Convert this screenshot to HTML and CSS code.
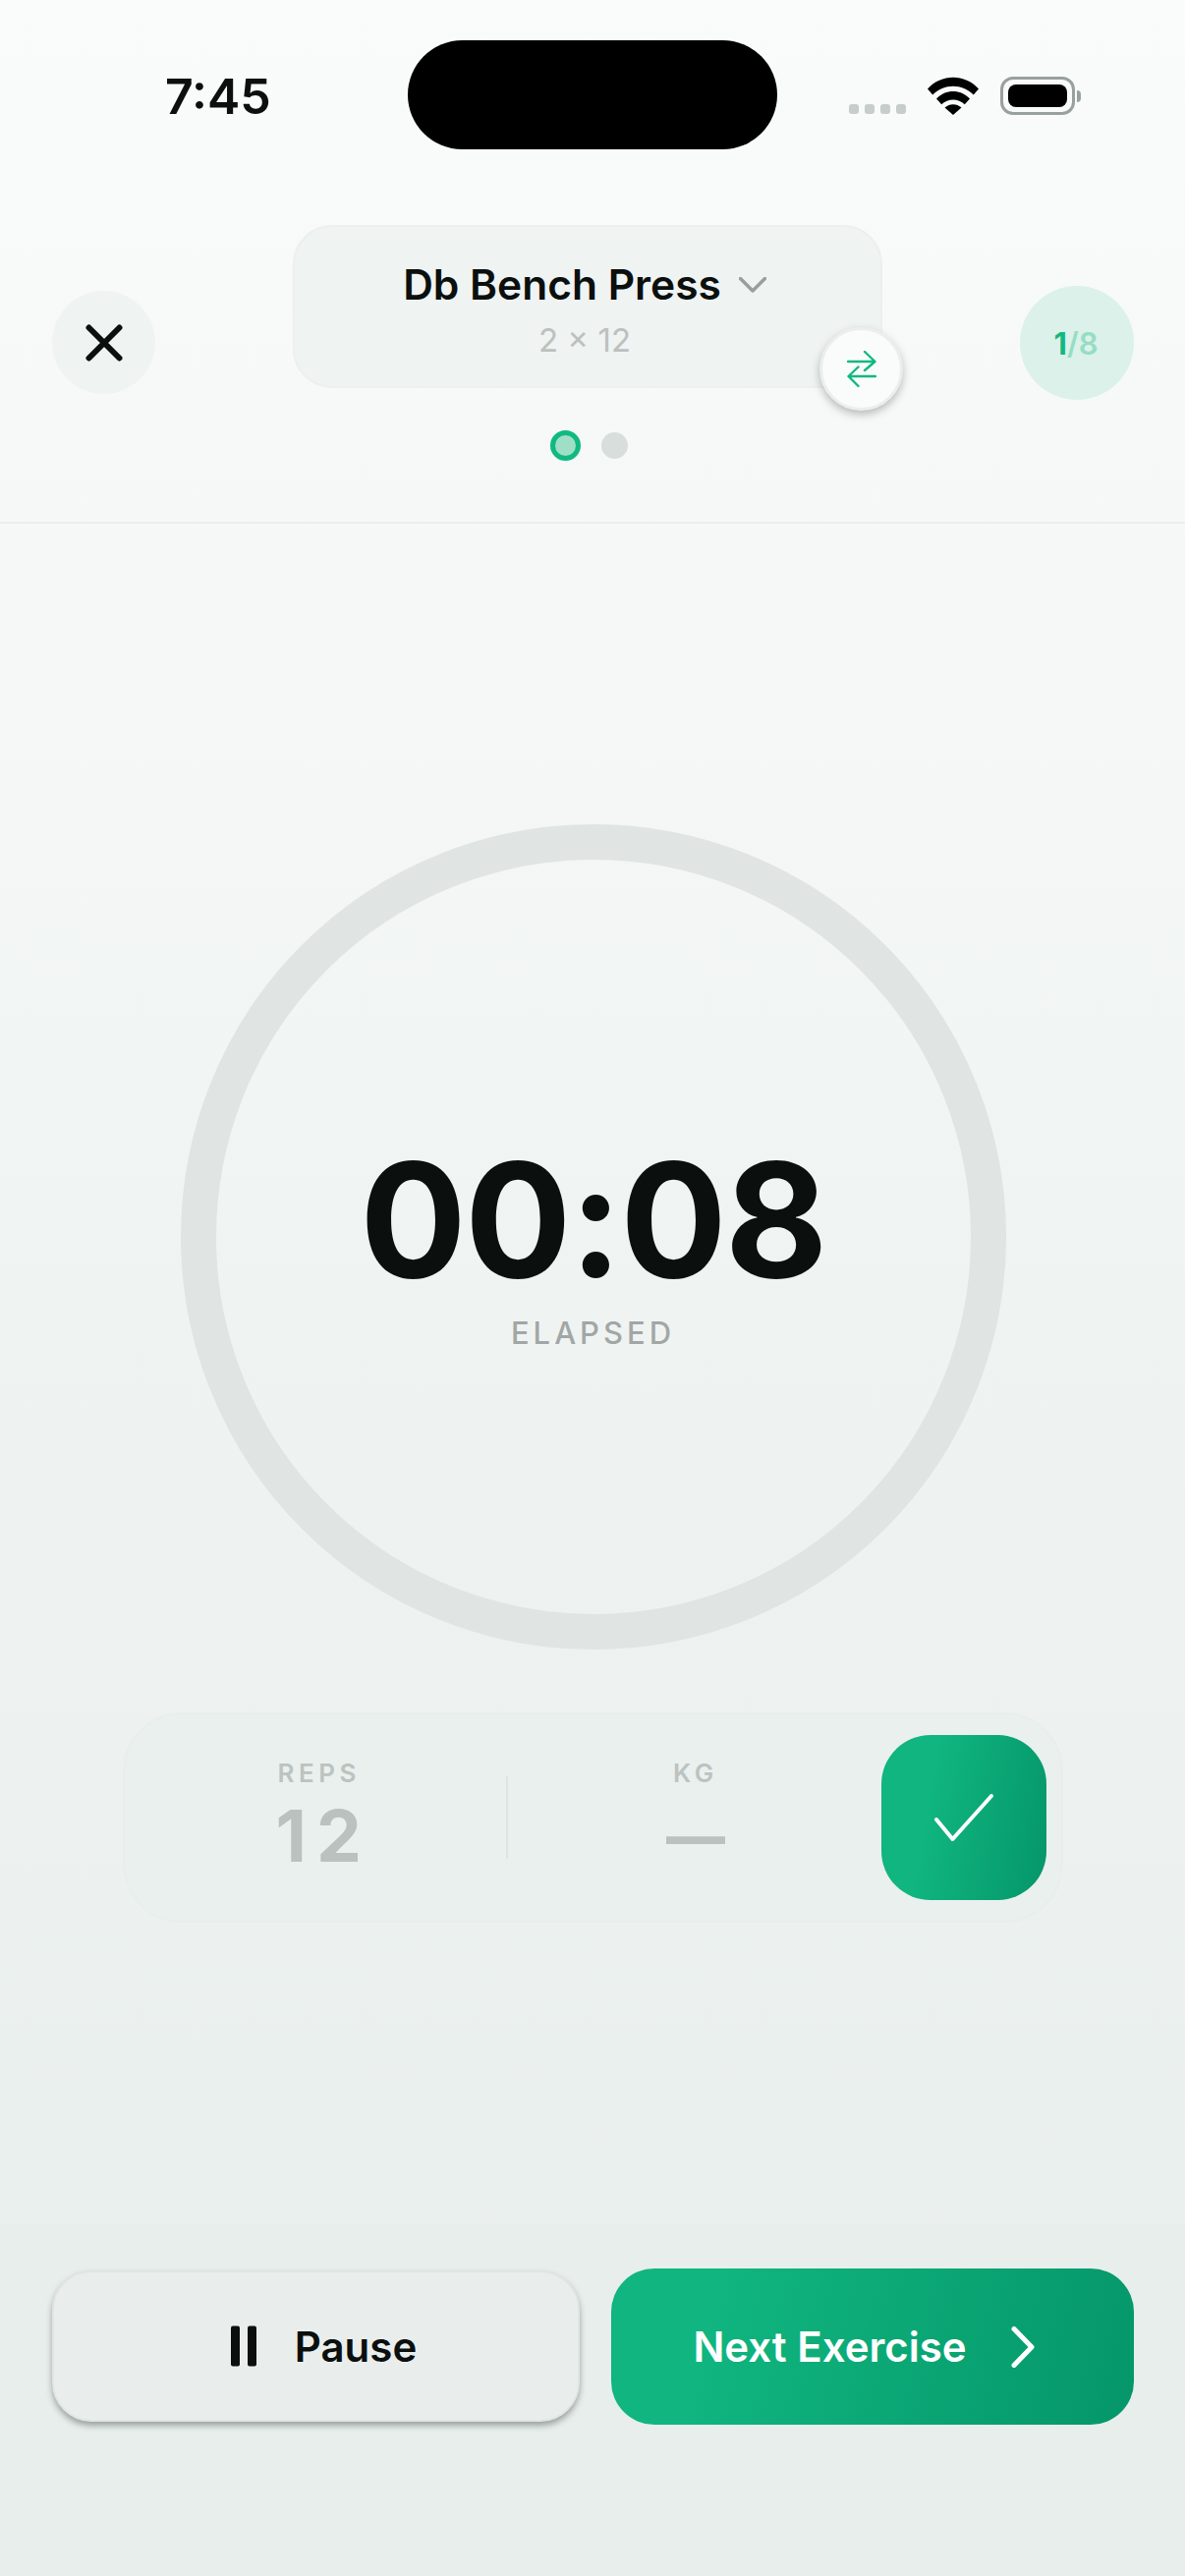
FILE: index.html
```html
<!DOCTYPE html>
<html lang="en">
<head>
  <meta charset="UTF-8" />
  <meta name="viewport" content="width=device-width, initial-scale=1.0" />
  <title>Workout Timer</title>
  <link rel="stylesheet" href="styles.css">
</head>
<body>
  <div class="screen">
    <div class="island"></div>

    <div class="status-bar">
      <span class="clock">7:45</span>
      <div class="status-icons">
        <div class="signal"><i></i><i></i><i></i><i></i></div>
        <svg class="wifi" viewBox="0 0 52 39" width="52" height="39">
          <path d="M0 12.500C14-3.200 38-3.200 52 12.500L46.800 18.500C35.500 6.800 16.500 6.800 5.200 18.500Z" fill="#000"/>
          <path d="M9 22.500C18.500 12.600 33.500 12.600 43 22.500L37.800 28.300C31.200 21.800 20.800 21.800 14.200 28.300Z" fill="#000"/>
          <path d="M17.500 31.500C22.500 27 29.500 27 34.500 31.500L26 39Z" fill="#000"/>
        </svg>
        <div class="battery"><div class="battery-fill"></div></div>
        <div class="battery-nub"></div>
      </div>
    </div>

    <header class="top">
      <button class="close-btn" aria-label="Close">
        <svg viewBox="0 0 38 38" width="38" height="38">
          <path d="M3.500 3.500L34.500 34.500M34.500 3.500L3.500 34.500" stroke="#0b0f0e" stroke-width="6" stroke-linecap="round" fill="none"/>
        </svg>
      </button>

      <div class="title-col">
        <div class="title-card">
          <div class="title-row">
            <span class="title">Db Bench Press</span>
            <svg viewBox="0 0 28 16" width="28" height="16">
              <path d="M1.500 1.500L14 14L26.500 1.500" stroke="#9a9f9d" stroke-width="3.500" stroke-linecap="round" stroke-linejoin="round" fill="none"/>
            </svg>
          </div>
          <div class="sub">2 × 12</div>
          <button class="swap-btn" aria-label="Swap exercise">
            <svg viewBox="0 0 30 38" width="30" height="38">
              <path d="M1 11H28M18 1L28.500 11L18 20M29 26H2M11.500 16.500L1.500 26L11.500 36" stroke="#10b981" stroke-width="2.400" stroke-linecap="round" stroke-linejoin="round" fill="none"/>
            </svg>
          </button>
        </div>
        <div class="pager">
          <span class="dot active"></span>
          <span class="dot"></span>
        </div>
      </div>

      <div class="badge"><b>1</b><span>/8</span></div>
    </header>

    <main class="main">
      <div class="ring">
        <div class="time">00:08</div>
        <div class="elapsed">ELAPSED</div>
      </div>

      <div class="stats">
        <div class="stat reps">
          <div class="stat-label">REPS</div>
          <div class="stat-value">12</div>
        </div>
        <div class="stat-line"></div>
        <div class="stat kg">
          <div class="stat-label">KG</div>
          <div class="stat-value">—</div>
        </div>
        <button class="check-btn" aria-label="Done">
          <svg viewBox="0 0 60 48" width="60" height="48">
            <path d="M2 26L18.500 46L58 2" stroke="#fff" stroke-width="4" stroke-linecap="round" stroke-linejoin="round" fill="none"/>
          </svg>
        </button>
      </div>
    </main>

    <footer class="bottom">
      <button class="pause-btn">
        <svg viewBox="0 0 26 42" width="26" height="42">
          <rect x="0" y="0.500" width="9" height="41" rx="2" fill="#0b0f0e"/>
          <rect x="17" y="0.500" width="9" height="41" rx="2" fill="#0b0f0e"/>
        </svg>
        <span>Pause</span>
      </button>
      <button class="next-btn">
        <span>Next Exercise</span>
        <svg viewBox="0 0 24 42" width="24" height="42">
          <path d="M3 2.500L21 21L3 39.500" stroke="#fff" stroke-width="5" stroke-linecap="round" stroke-linejoin="round" fill="none"/>
        </svg>
      </button>
    </footer>
  </div>
</body>
</html>
```

FILE: styles.css
```css
* {
  box-sizing: border-box;
}

body {
  margin: 0;
  font-family: 'Inter', 'Liberation Sans', sans-serif;
  color: #0b0f0e;
}

button {
  border: none;
  padding: 0;
  font-family: inherit;
  cursor: pointer;
}

.screen {
  position: relative;
  width: 1206px;
  height: 2622px;
  display: flex;
  flex-direction: column;
  background: linear-gradient(180deg, #fafbfb 0%, #f4f7f6 30%, #eff4f3 50%, #e8eeec 100%);
  overflow: hidden;
}

.island {
  position: absolute;
  left: 415px;
  top: 41px;
  width: 376px;
  height: 111px;
  border-radius: 56px;
  background: #000;
}

/* status bar */
.status-bar {
  height: 229px;
  padding: 0 106px 0 168px;
  display: flex;
  justify-content: space-between;
  align-items: flex-start;
}

.clock {
  margin-top: 66px;
  font-size: 50px;
  line-height: 64px;
  font-weight: 600;
}

.status-icons {
  margin-top: 78px;
  display: flex;
  align-items: center;
}

.signal {
  display: flex;
  gap: 6px;
  align-self: flex-end;
  margin: 0 22px 1px 0;
}

.signal i {
  width: 10px;
  height: 10px;
  border-radius: 3px;
  background: #c6cdca;
}

.wifi {
  margin-right: 22px;
}

.battery {
  width: 76px;
  height: 39px;
  padding: 5px;
  border: 3px solid #99a19e;
  border-radius: 13px;
}

.battery-fill {
  height: 100%;
  border-radius: 8px;
  background: #000;
}

.battery-nub {
  width: 4px;
  height: 12px;
  margin-left: 2px;
  border-radius: 0 4px 4px 0;
  background: #99a19e;
}

/* header */
.top {
  height: 304px;
  padding: 0 52px 0 53px;
  display: flex;
  justify-content: space-between;
  align-items: flex-start;
  border-bottom: 2px solid #eceeed;
}

.close-btn {
  width: 105px;
  height: 105px;
  margin-top: 67px;
  border-radius: 50%;
  background: #eff3f2;
  display: flex;
  align-items: center;
  justify-content: center;
}

.title-col {
  display: flex;
  flex-direction: column;
  align-items: center;
  gap: 43px;
}

.title-card {
  position: relative;
  width: 600px;
  height: 166px;
  padding: 33px 6px 0 0;
  border: 2px solid #ecefee;
  border-radius: 40px;
  background: #eff3f2;
  text-align: center;
}

.title-row {
  display: flex;
  justify-content: center;
  align-items: center;
  gap: 18px;
  height: 52px;
}

.title {
  font-size: 42.500px;
  font-weight: 600;
  line-height: 52px;
}

.sub {
  margin-top: 8px;
  font-size: 33px;
  line-height: 44px;
  color: #bcc1bf;
}

.swap-btn {
  position: absolute;
  right: -23px;
  top: 102px;
  width: 85px;
  height: 85px;
  border-radius: 50%;
  background: #fafbfb;
  border: 3px solid #eceeed;
  box-shadow: 0 4px 8px rgba(60, 75, 70, 0.35);
  display: flex;
  align-items: center;
  justify-content: center;
}

.pager {
  display: flex;
  align-items: center;
  gap: 21px;
  height: 31px;
  margin-left: 2px;
}

.dot {
  width: 27px;
  height: 27px;
  border-radius: 50%;
  background: #d8dedc;
}

.dot.active {
  width: 31px;
  height: 31px;
  background: #9fdfc7;
  border: 5px solid #10b981;
}

.badge {
  width: 116px;
  height: 116px;
  margin-top: 62px;
  padding-right: 2px;
  border-radius: 50%;
  background: #dcf1e9;
  display: flex;
  align-items: center;
  justify-content: center;
  font-size: 31px;
  color: #10b981;
}

.badge b {
  font-weight: 700;
}

.badge span {
  font-weight: 600;
  color: #95dec3;
}

/* timer */
.main {
  flex: 1;
  padding-left: 1px;
  display: flex;
  flex-direction: column;
  align-items: center;
  justify-content: center;
  gap: 64px;
}

.ring {
  width: 840px;
  height: 840px;
  border: 36px solid #e0e4e2;
  border-radius: 50%;
  display: flex;
  flex-direction: column;
  align-items: center;
  justify-content: center;
  padding-top: 4px;
}

.time {
  font-size: 161px;
  font-weight: 700;
  line-height: 190px;
  letter-spacing: -2px;
  color: #0b0f0e;
}

.elapsed {
  font-size: 31px;
  font-weight: 500;
  line-height: 38px;
  letter-spacing: 4px;
  color: #a2a7a5;
  margin-top: 1px;
}

/* reps and weight */
.stats {
  width: 957px;
  height: 214px;
  padding: 0 15px 0 0;
  border: 2px solid #e9eeec;
  border-radius: 60px;
  background: #eaf0ee;
  display: flex;
  align-items: center;
}

.stat {
  display: flex;
  flex-direction: column;
  align-items: center;
}

.reps {
  width: 388px;
  padding-left: 8px;
}

.kg {
  width: 381px;
  padding-left: 2px;
}

.stat-label {
  font-size: 26px;
  font-weight: 600;
  line-height: 32px;
  letter-spacing: 4.500px;
  color: #bcc3c0;
}

.stat-value {
  font-size: 73px;
  font-weight: 700;
  line-height: 86px;
  margin-top: 5px;
  margin-left: 9px;
  letter-spacing: 10px;
  color: #bac1be;
}

.kg .stat-value {
  margin-left: 0;
  font-size: 60px;
  font-weight: 800;
  letter-spacing: 0;
}

.stat-line {
  width: 2px;
  height: 84px;
  background: #dfe4e2;
}

.check-btn {
  width: 168px;
  height: 168px;
  border-radius: 50px;
  background: linear-gradient(100deg, #10b57f 30%, #059669 100%);
  display: flex;
  align-items: center;
  justify-content: center;
}

/* bottom buttons */
.bottom {
  height: 359px;
  padding: 46px 52px 0 53px;
  display: flex;
  align-items: flex-start;
  gap: 32px;
  background: #e8eeec;
}

.pause-btn,
.next-btn {
  display: flex;
  align-items: center;
  justify-content: center;
  font-size: 42px;
  font-weight: 600;
}

.pause-btn {
  width: 537px;
  height: 154px;
  margin-top: 2px;
  padding-left: 16px;
  gap: 39px;
  border-radius: 40px;
  background: #e9eeed;
  color: #0b0f0e;
  border: 2px solid #e1e5e3;
  box-shadow: 0 4px 6px rgba(60, 70, 66, 0.45);
}

.next-btn {
  width: 532px;
  height: 159px;
  padding-right: 18px;
  gap: 45px;
  border-radius: 44px;
  background: linear-gradient(105deg, #10b57f 20%, #059669 100%);
  color: #fff;
}
```
